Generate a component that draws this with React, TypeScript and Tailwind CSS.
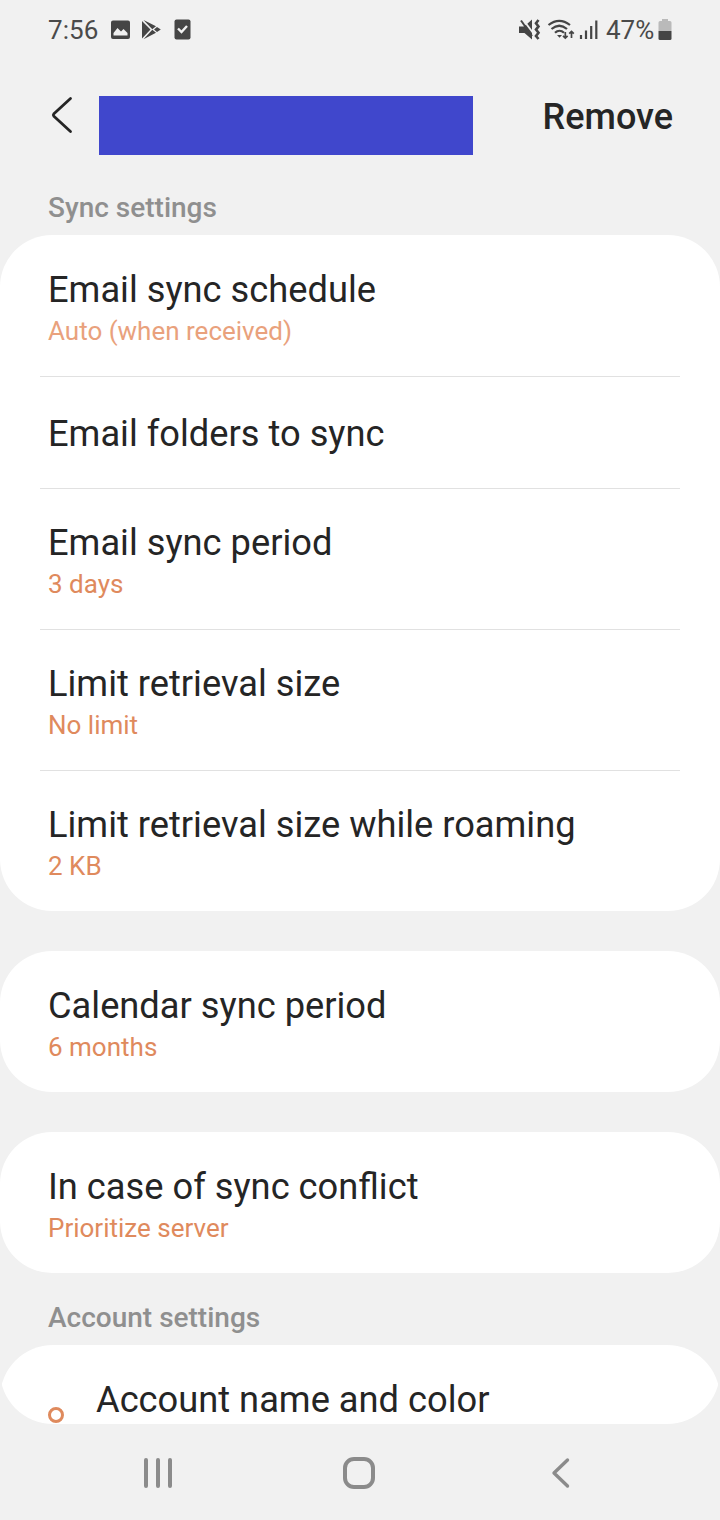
import React from "react";

type Item = {
    title: string;
    value?: string;
    valueClass?: string;
};

const emailItems: Item[] = [
    { title: "Email sync schedule", value: "Auto (when received)", valueClass: "text-[#e9a17c]" },
    { title: "Email folders to sync" },
    { title: "Email sync period", value: "3 days" },
    { title: "Limit retrieval size", value: "No limit" },
    { title: "Limit retrieval size while roaming", value: "2 KB" },
];

function StatusBar() {
    return (
        <div className="flex h-[60px] items-center justify-between pl-12 pr-[47px] text-[26px] text-[#4a4a4a]">
            <div className="flex items-center">
                <span className="w-[62px] tracking-[0.1px]">7:56</span>
                <svg width="82" height="22" viewBox="110 19 82 22" fill="#454545">
                    <path fillRule="evenodd" d="M113 20.500h15a2 2 0 0 1 2 2v14.500a2 2 0 0 1-2 2h-15a2 2 0 0 1-2-2v-14.500a2 2 0 0 1 2-2zM113.500 35.500h14v-2.500l-4-4-2.500 2.500-3.500-3.500-4 5z" />
                    <path d="M142 21l8.500 8.500-8.500 9zM143.500 20l12.500 6.300-3.700 3zM143.500 39.300l12.500-6.500-3.700-3zM157 27l3.800 2.500-3.800 2.600-3-2.600z" />
                    <rect x="174.500" y="19.500" width="16" height="20" rx="2" />
                    <path d="M178 28.500l3.500 3.500 5.500-6" fill="none" stroke="#f1f1f1" strokeWidth="2.400" />
                </svg>
            </div>
            <div className="flex items-center">
                <svg width="82" height="22" viewBox="518 19 82 22" fill="none" stroke="#454545">
                    <path d="M519 26.500h4.500l3.500-2.500 5-4.500v20l-7.500-6.500H519z" fill="#454545" stroke="none" />
                    <path d="M523 19.500l10.500 14" stroke="#f1f1f1" strokeWidth="1.800" />
                    <path d="M521 20.500l11 15.500" strokeWidth="2" />
                    <path d="M538.500 20l-2.500 3.200 2.500 3.200-2.500 3.200 2.500 3.200-2.500 3.200 2.500 3" strokeWidth="2.600" />
                    <path d="M548.500 25c7-5.500 14.500-5.500 21.500 0M551.500 29c5-4.200 10.500-4.200 15.500 0M555 32.700c2.700-2.600 6.300-2.600 9 0" strokeWidth="2.200" />
                    <path d="M557 35h5l-2.500 2.800z" fill="#454545" stroke="none" />
                    <path d="M565.300 32v6M563 35.800l2.300 2.300 2.300-2.300M571.500 38v-6.500M569.200 33.700l2.300-2.300 2.300 2.300" strokeWidth="1.700" />
                    <path d="M581 35v4M586 30.500V39M591.200 26v13M596.300 20.500V39" strokeWidth="2.200" />
                </svg>
                <span className="ml-1.5 w-[52px] whitespace-nowrap">47%</span>
                <svg width="15" height="22" viewBox="0 0 15 22">
                    <path d="M4 0h6v2h2a1.500 1.500 0 0 1 1.500 1.500V12h-13V3.500A1.500 1.500 0 0 1 2 2h2z" fill="#bababa" />
                    <path d="M.5 12h13v7.500a1.500 1.500 0 0 1-1.500 1.500H2a1.500 1.500 0 0 1-1.500-1.500z" fill="#454545" />
                </svg>
            </div>
        </div>
    );
}

function Header() {
    return (
        <div className="flex h-[116px] items-start pl-12 pr-[47px] pt-9">
            <svg className="mr-[23px]" width="28" height="40" viewBox="0 0 28 40" fill="none" stroke="#252525" strokeWidth="2.800" strokeLinecap="round" strokeLinejoin="round">
                <path d="M22.500 2.500L5.900 17.700Q4.800 19 5.900 20.300L22.500 35.500" />
            </svg>
            <div className="h-[59px] w-[374px] bg-[#4047cc]" />
            <button className="ml-auto text-[36px] font-medium leading-[42px] text-[#252525]">Remove</button>
        </div>
    );
}

function SectionTitle({ children }: { children: React.ReactNode }) {
    return <h2 className="pl-12 text-[28px] font-medium leading-8 text-[#8f8f8f]">{children}</h2>;
}

function Row({ item }: { item: Item }) {
    return (
        <div className={item.value ? "h-[140px] px-12 pt-[33px]" : "h-[111px] px-12 pt-9"}>
            <p className="text-[36.25px] leading-[42px] text-[#252525]">{item.title}</p>
            {item.value && (
                <p className={`pt-[5px] text-[26px] leading-[30px] ${item.valueClass ?? "text-[#df8a5d]"}`}>{item.value}</p>
            )}
        </div>
    );
}

function Card({ items }: { items: Item[] }) {
    return (
        <section className="rounded-[52px] bg-white pt-px">
            {items.map((item, i) => (
                <React.Fragment key={item.title}>
                    {i > 0 && <div className="mx-10 h-px bg-[#e1e1e1]" />}
                    <Row item={item} />
                </React.Fragment>
            ))}
        </section>
    );
}

function NavBar() {
    return (
        <div className="flex h-24 items-center pl-[142px] pt-0.5 text-[#8b8b8b]">
            <svg width="32" height="32" viewBox="0 0 32 32" stroke="currentColor" strokeWidth="4" strokeLinecap="round">
                <path d="M4 3v26M16 3v26M28 3v26" />
            </svg>
            <svg className="ml-[169px]" width="32" height="32" viewBox="0 0 32 32" fill="none" stroke="currentColor" strokeWidth="4">
                <rect x="2" y="2" width="28" height="28" rx="9" />
            </svg>
            <svg className="ml-[175px]" width="22" height="32" viewBox="0 0 22 32" fill="none" stroke="currentColor" strokeWidth="3.400" strokeLinecap="round" strokeLinejoin="round">
                <path d="M17.500 3L4 16l13.500 13" />
            </svg>
        </div>
    );
}

export default function App() {
    return (
        <div className="flex h-[1520px] w-[720px] flex-col overflow-hidden bg-[#f1f1f1] font-['Roboto',sans-serif]">
            <StatusBar />
            <Header />
            <main className="h-[1248px] overflow-hidden rounded-b-[53px]">
                <div className="h-[59px] pt-4">
                    <SectionTitle>Sync settings</SectionTitle>
                </div>
                <div className="flex flex-col gap-10">
                    <Card items={emailItems} />
                    <Card items={[{ title: "Calendar sync period", value: "6 months" }]} />
                    <Card items={[{ title: "In case of sync conflict", value: "Prioritize server" }]} />
                </div>
                <div className="h-[72px] pt-[29px]">
                    <SectionTitle>Account settings</SectionTitle>
                </div>
                <section className="flex h-[141px] items-start rounded-[53px] bg-white pl-12 pt-[34px]">
                    <span className="mt-7 h-4 w-4 rounded-full border-3 border-[#df8a5d]" />
                    <p className="pl-8 text-[36.25px] leading-[42px] text-[#252525]">Account name and color</p>
                </section>
            </main>
            <NavBar />
        </div>
    );
}
